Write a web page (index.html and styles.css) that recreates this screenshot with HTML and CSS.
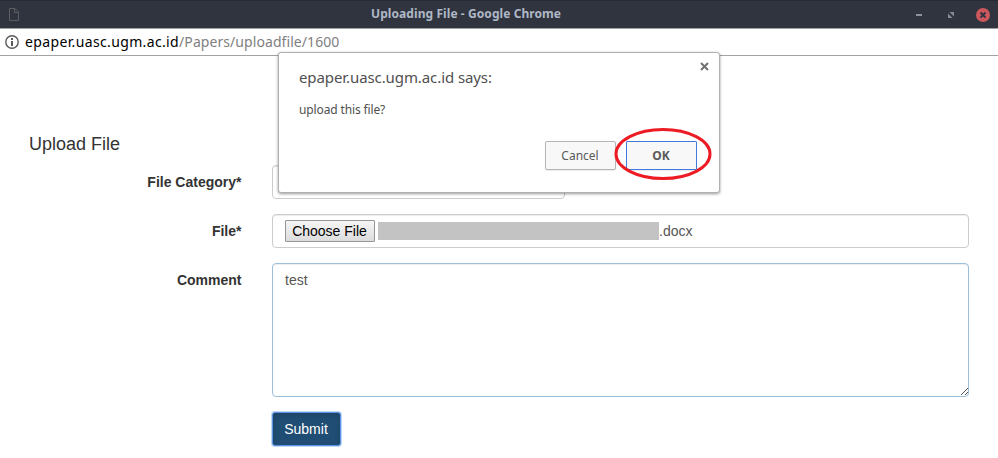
FILE: index.html
```html
<!DOCTYPE html>
<html lang="en">
<head>
<meta charset="utf-8">
<title>Uploading File</title>
<link rel="stylesheet" href="styles.css">
</head>
<body>
<header class="titlebar">
  <svg class="doc" width="12" height="15" viewBox="0 0 12 15"><path d="M1.5 1.5h5.5l3.5 3.5v8.500h-9zM6.500 1.500v4h4" fill="none" stroke="#5d5e62"/></svg>
  <span class="title">Uploading File - Google Chrome</span>
  <div class="controls">
    <svg width="6" height="14" viewBox="0 0 6 14"><path d="M0 6h6v2H0z" fill="#8d929e"/></svg>
    <svg width="6" height="14" viewBox="0 0 6 14"><path d="M1.500 4H6v4.500zM0 5.500L4.500 10H0z" fill="#858a96"/></svg>
    <svg width="14" height="14" viewBox="0 0 14 14"><circle cx="7" cy="7" r="7" fill="#cc575d"/><path d="M4.500 4.500l5 5M9.500 4.500l-5 5" stroke="#2f343f" stroke-width="1.900"/></svg>
  </div>
</header>
<div class="address">
  <svg width="14" height="14" viewBox="0 0 14 14"><circle cx="7" cy="7" r="6.200" fill="none" stroke="#5a5a5a" stroke-width="1.400"/><path d="M6 3h2v2H6zM6 6h2v5H6z" fill="#5a5a5a"/></svg>
  <span class="url"><span class="host">epaper.uasc.ugm.ac.id</span>/Papers/uploadfile/1600</span>
</div>
<form class="form">
  <h1>Upload File</h1>
  <div class="row"><label>File Category*</label><div class="control category"></div></div>
  <div class="row"><label>File*</label><div class="control file"><button type="button" class="choose">Choose File</button><span class="redacted"></span><span>.docx</span></div></div>
  <div class="row"><label>Comment</label><div class="area"><textarea class="control comment">test</textarea><svg class="grip" width="8" height="8" viewBox="0 0 8 8"><path d="M.5 7.500l7-7M4.500 7.500l3-3" stroke="#555" shape-rendering="crispEdges"/></svg></div></div>
  <div class="row"><label></label><button type="button" class="submit">Submit</button></div>
</form>
<section class="dialog">
  <svg class="close" width="9" height="9" viewBox="0 0 9 9"><path d="M1 1l7 7M8 1L1 8" stroke="#707070" stroke-width="2"/></svg>
  <h2>epaper.uasc.ugm.ac.id says:</h2>
  <p>upload this file?</p>
  <div class="actions"><button type="button">Cancel</button><button type="button" class="ok">OK</button></div>
  <svg class="ring" width="98" height="54" viewBox="0 0 98 54"><ellipse cx="49" cy="27" rx="47" ry="24.500" fill="none" stroke="#ed1c24" stroke-width="3"/></svg>
</section>
</body>
</html>
```
FILE: styles.css
```css
* { box-sizing: border-box; }
body {
  margin: 0;
  height: 458px;
  overflow: hidden;
  background: #fff;
  color: #333;
  font: 14px/20px "Liberation Sans", Arial, sans-serif;
}
svg { display: block; flex: none; }
button { font: inherit; padding: 0; margin: 0; }
.titlebar {
  display: grid;
  grid-template-columns: 363px auto 1fr;
  align-items: center;
  height: 29px;
  padding: 0 8px;
  background: #2f343f;
  border-top: 1px solid #262a33;
  border-bottom: 1px solid #a0a1a4;
}
.title {
  padding-bottom: 2px;
  color: #afb8c6;
  font: bold 12px/20px "Noto Sans", sans-serif;
  letter-spacing: .08px;
}
.controls { display: flex; gap: 26px; justify-content: flex-end; align-items: center; }
.controls svg:last-child { margin-left: -4px; }
.address {
  display: flex;
  align-items: center;
  gap: 6px;
  height: 27px;
  padding: 0 5px;
  border-bottom: 1px solid #a3a3a3;
}
.url { color: #808080; font: 14px/20px "Noto Sans", sans-serif; letter-spacing: .07px; }
.host { color: #000; letter-spacing: .36px; }
.form { padding: 78px 29px 0; }
.form h1 { height: 21px; margin: 0 0 10px; font-size: 18px; line-height: 20px; font-weight: normal; }
.row { display: flex; gap: 30px; margin-bottom: 15px; }
.row label { width: 213px; padding: 7px .5px 0 0; text-align: right; font-weight: bold; }
.control {
  flex: 1;
  height: 34px;
  padding: 6px 12px;
  border: 1px solid #ccc;
  border-radius: 4px;
  background: #fff;
  color: #555;
  box-shadow: inset 0 1px 1px rgba(0, 0, 0, .075);
}
.category { flex: none; width: 293px; }
.file { display: flex; align-items: center; }
.choose {
  width: 90px;
  height: 22px;
  padding-right: 1px;
  border: 1px solid #969696;
  border-radius: 1px;
  background: linear-gradient(#f6f6f6, #dcdcdc);
  color: #000;
}
.redacted { width: 281px; height: 18px; margin: 0 0 0 3px; background: #c3c3c3; }
.area { flex: 1; position: relative; height: 134px; }
.comment {
  display: block;
  width: 100%;
  height: 134px;
  font: inherit;
  resize: none;
  border-color: #9cbfdc;
}
.grip { position: absolute; right: 1px; bottom: 1px; }
.submit {
  width: 69px;
  height: 34px;
  padding-right: 1px;
  border: 1px solid #5c93e2;
  border-radius: 3px;
  background: #204d74;
  color: #fff;
  box-shadow: 0 0 0 1px rgba(130, 173, 240, .5), inset 0 3px 5px rgba(0, 0, 0, .125);
}
.dialog {
  position: absolute;
  left: 278px;
  top: 52px;
  width: 442px;
  height: 141px;
  padding: 14px 22px 22px 20px;
  border: 1px solid #b0b0b0;
  border-radius: 3px;
  background: #fff;
  box-shadow: 0 1px 3px rgba(0, 0, 0, .4);
  color: #505050;
  font: 12px/20px "Noto Sans", sans-serif;
}
.dialog h2 { margin: 0 0 13px; font-size: 15px; font-weight: normal; line-height: 20px; letter-spacing: -.09px; }
.dialog p { margin: 0 0 21px; letter-spacing: -.13px; }
.close { position: absolute; right: 10px; top: 9px; }
.actions { display: flex; justify-content: flex-end; gap: 10px; }
.actions button {
  width: 71px;
  height: 29px;
  padding-right: 1px;
  border: 1px solid #b5b5b5;
  border-radius: 2px;
  background: #f8f8f8;
  color: #5a5a5a;
  box-shadow: 0 1px 1px rgba(0, 0, 0, .08);
}
.actions .ok { border-color: #4279dc; border-radius: 1px; font-weight: bold; }
.ring { position: absolute; left: 335px; top: 74px; }
```
